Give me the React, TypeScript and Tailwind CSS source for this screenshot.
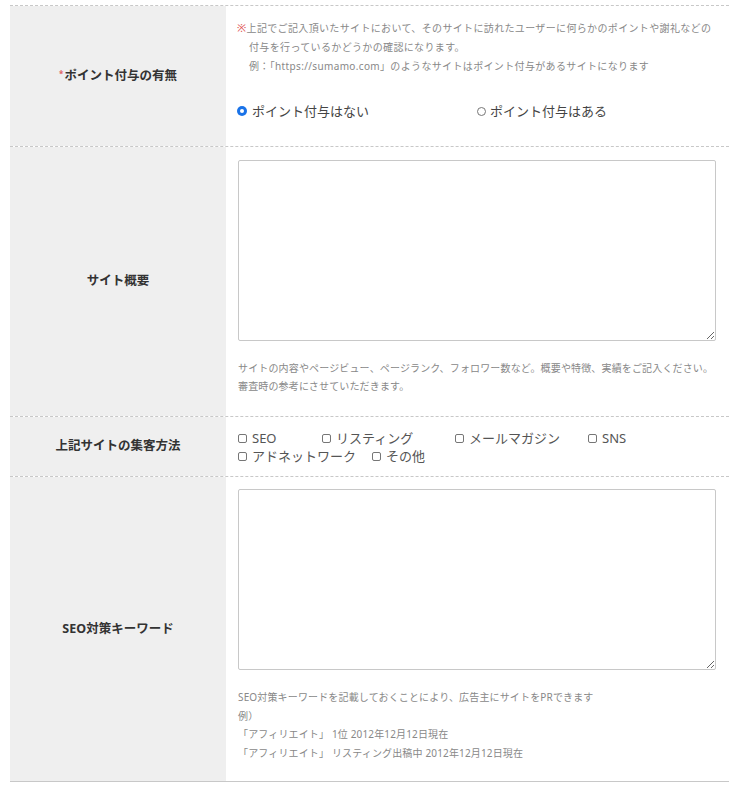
import React from "react";

const font = { fontFamily: '"Noto Sans", "Noto Sans CJK JP", sans-serif' };

function Check({ label, w }: { label: string; w?: string }) {
  return (
    <span className={`inline-flex items-center ${w ?? ""}`}>
      <span className="inline-block w-[9px] h-[9px] border border-[#767676] rounded-[2px] bg-white mr-[5px]" />
      <span>{label}</span>
    </span>
  );
}

export default function App() {
  return (
    <div className="bg-white w-[736px] h-[792px] pt-[5px]" style={font}>
      <div className="ml-[10px] w-[719px] border-b border-[#c8c8c8]">
        {/* Row 1 */}
        <div className="flex border-t border-dashed border-[#c8c8c8]">
          <div className="w-[216px] shrink-0 bg-[#efefef] flex items-center justify-center font-bold text-[12.5px] text-[#333]">
            <span className="text-[#e06060] text-[8px] mr-[1px] -mt-[4px]">*</span>
            ポイント付与の有無
          </div>
          <div className="flex-1 pl-[11px] pr-[10px] pt-[12px] pb-[25px]">
            <div className="text-[10px] leading-[19px] text-[#888] tracking-[0.35px]">
              <div>
                <span className="text-[#e05050] text-[11px]">※</span>上記でご記入頂いたサイトにおいて、そのサイトに訪れたユーザーに何らかのポイントや謝礼などの
              </div>
              <div className="pl-[12px]">付与を行っているかどうかの確認になります。</div>
              <div className="pl-[12px]">例：「https://sumamo.com」のようなサイトはポイント付与があるサイトになります</div>
            </div>
            <div className="mt-[25px] flex items-center text-[13px] leading-[20px] text-[#444]">
              <span className="inline-flex items-center w-[240px]">
                <span className="inline-flex items-center justify-center w-[10px] h-[10px] rounded-full bg-[#1a73e8] mr-[5px]">
                  <span className="w-[4px] h-[4px] rounded-full bg-white" />
                </span>
                ポイント付与はない
              </span>
              <span className="inline-flex items-center">
                <span className="inline-block w-[9px] h-[9px] rounded-full border border-[#767676] mr-[4px]" />
                ポイント付与はある
              </span>
            </div>
          </div>
        </div>
        {/* Row 2 */}
        <div className="flex border-t border-dashed border-[#c8c8c8]">
          <div className="w-[216px] shrink-0 bg-[#efefef] flex items-center justify-center font-bold text-[12.5px] text-[#333]">
            サイト概要
          </div>
          <div className="flex-1 pl-[12px] pr-[13px] pt-[13px] pb-[21px]">
            <textarea className="block w-[478px] h-[181px] border border-[#c8c8c8] rounded-[2px] bg-white outline-none" />
            <div className="mt-[18px] text-[10px] leading-[18px] text-[#888] tracking-[0.15px]">
              <div>サイトの内容やページビュー、ページランク、フォロワー数など。概要や特徴、実績をご記入ください。</div>
              <div>審査時の参考にさせていただきます。</div>
            </div>
          </div>
        </div>
        {/* Row 3 */}
        <div className="flex border-t border-dashed border-[#c8c8c8]">
          <div className="w-[216px] shrink-0 bg-[#efefef] flex items-center justify-center font-bold text-[12.5px] text-[#333]">
            上記サイトの集客方法
          </div>
          <div className="flex-1 pl-[12px] pr-[13px] pt-[12px] pb-[11px] text-[13px] leading-[18px] text-[#555]">
            <div className="flex">
              <Check label="SEO" w="w-[84px]" />
              <Check label="リスティング" w="w-[133px]" />
              <Check label="メールマガジン" w="w-[133px]" />
              <Check label="SNS" />
            </div>
            <div className="flex">
              <Check label="アドネットワーク" w="w-[134px]" />
              <Check label="その他" />
            </div>
          </div>
        </div>
        {/* Row 4 */}
        <div className="flex border-t border-dashed border-[#c8c8c8]">
          <div className="w-[216px] shrink-0 bg-[#efefef] flex items-center justify-center font-bold text-[12.5px] text-[#333]">
            SEO対策キーワード
          </div>
          <div className="flex-1 pl-[12px] pr-[13px] pt-[12px] pb-[18px]">
            <textarea className="block w-[478px] h-[181px] border border-[#c8c8c8] rounded-[2px] bg-white outline-none" />
            <div className="mt-[18px] text-[10px] leading-[18.7px] text-[#888] tracking-[0.15px]">
              <div>SEO対策キーワードを記載しておくことにより、広告主にサイトをPRできます</div>
              <div>例）</div>
              <div>「アフィリエイト」 1位 2012年12月12日現在</div>
              <div>「アフィリエイト」 リスティング出稿中 2012年12月12日現在</div>
            </div>
          </div>
        </div>
      </div>
    </div>
  );
}
